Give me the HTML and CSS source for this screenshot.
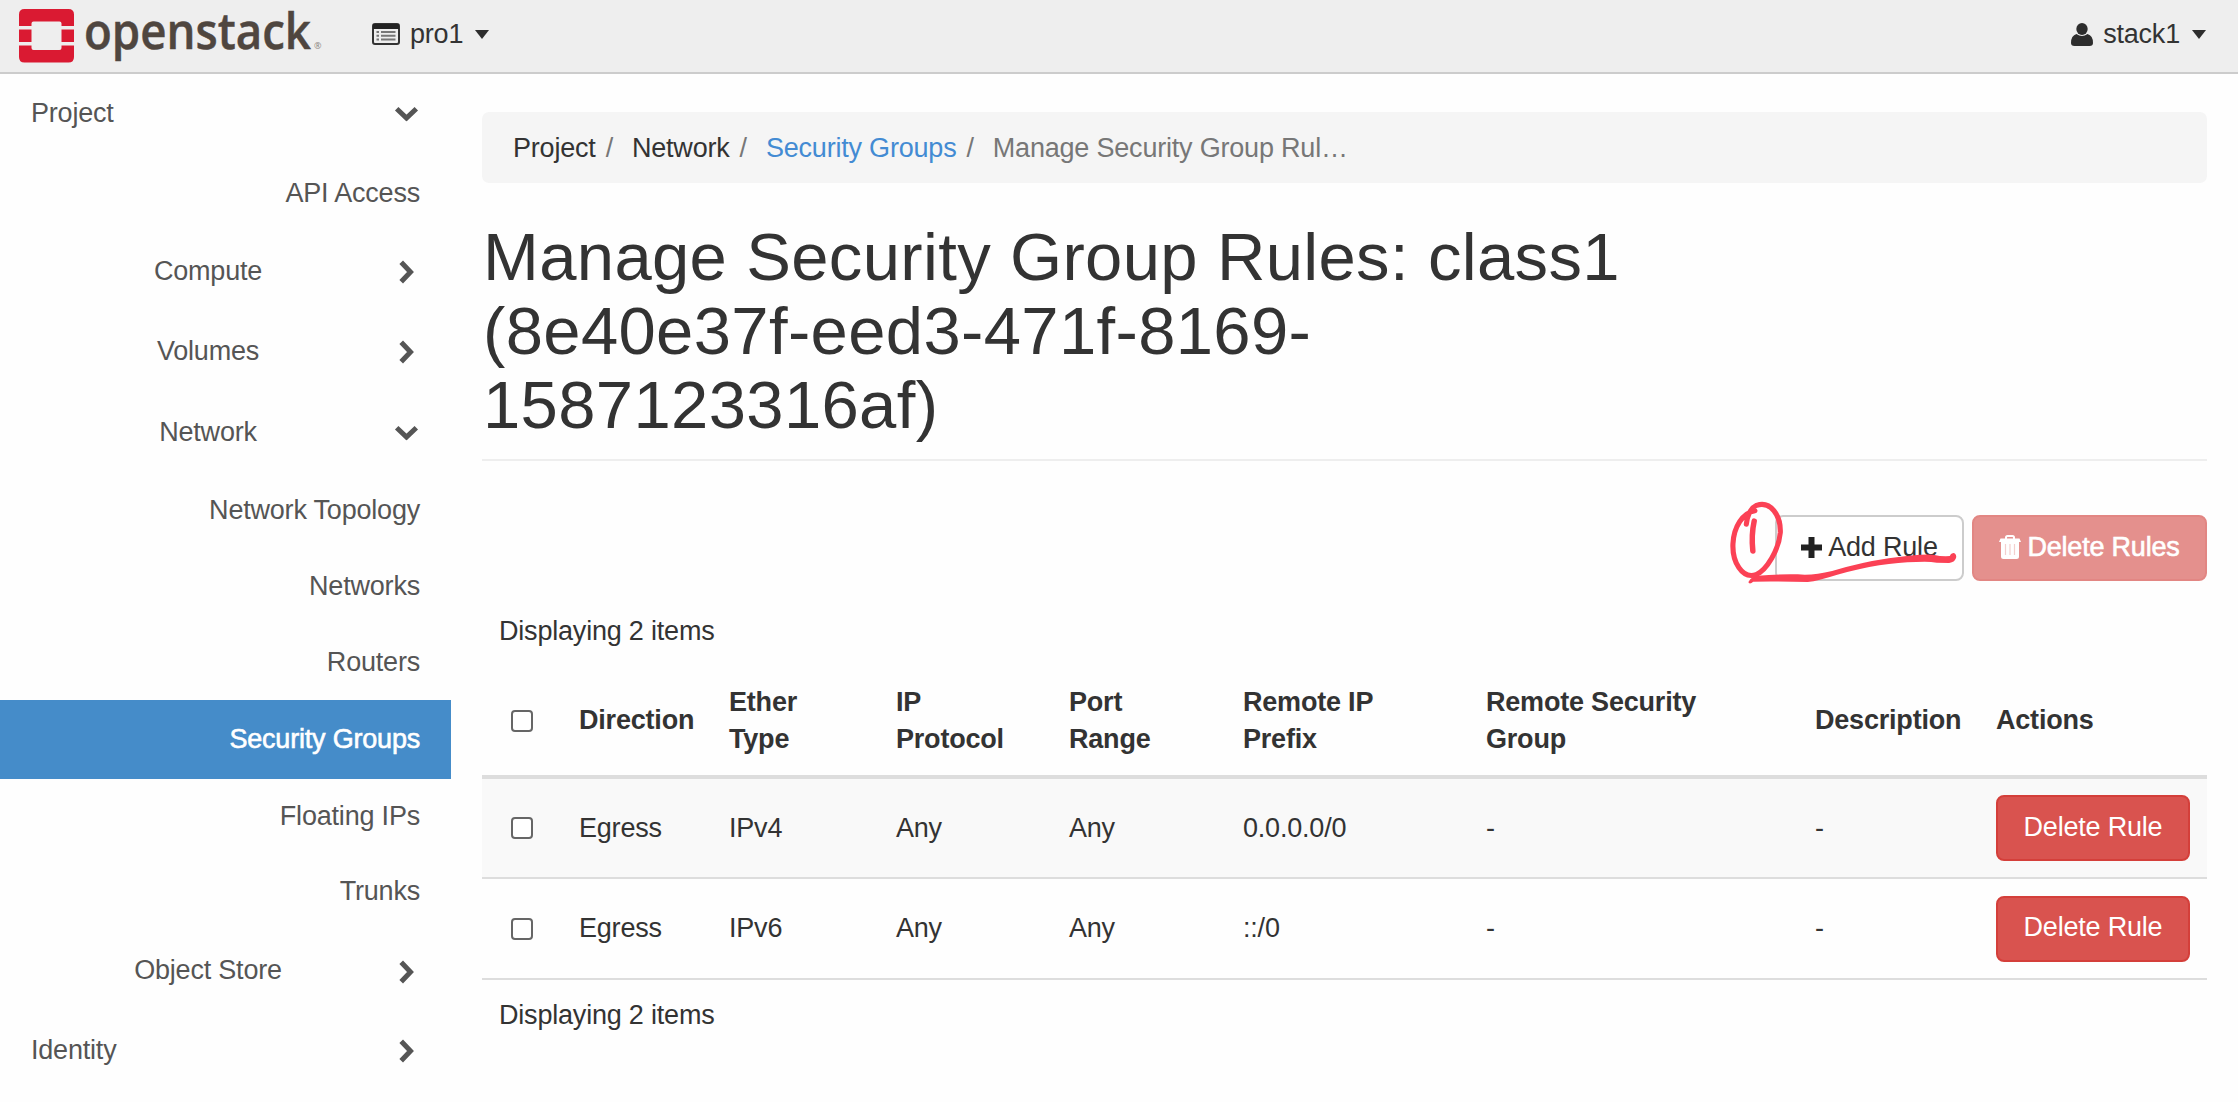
FILE: index.html
```html
<!DOCTYPE html>
<html lang="en">
<head>
<meta charset="utf-8">
<title>Manage Security Group Rules - OpenStack Dashboard</title>
<link rel="stylesheet" href="styles.css">
</head>
<body>
<svg class="sprite" aria-hidden="true">
  <symbol id="chevron" viewBox="0 0 15 24"><path d="M2.2 2.2 L11.5 12 L2.2 21.8" fill="none" stroke="currentColor" stroke-width="5"/></symbol>
</svg>
<header class="topbar">
  <a class="brand">
    <svg class="brand-logo" viewBox="0 0 310 60" role="img">
      <g fill="#da1a32">
        <path d="M0 17V5.500Q0 0 5.500 0H49.500Q55 0 55 5.500V17H42.500V14.500Q42.500 12.500 40.500 12.500H14.500Q12.500 12.500 12.500 14.500V17Z"/>
        <path d="M0 36.500V48Q0 53.500 5.500 53.500H49.500Q55 53.500 55 48V36.500H42.500V39Q42.500 41 40.500 41H14.500Q12.500 41 12.500 39V36.500Z"/>
        <path d="M0 20.500H12.500V33H0ZM42.500 20.500H55V33H42.500Z"/>
      </g>
      <text class="brand-name" x="65" y="40" textLength="227" lengthAdjust="spacingAndGlyphs">openstack</text>
      <text class="brand-mark" x="295" y="40">®</text>
    </svg>
  </a>
  <div class="menu">
    <svg class="icon-list" viewBox="0 0 28 22"><rect x="1" y="1" width="26" height="20" rx="2" fill="#eee" stroke="#333" stroke-width="2"/><path d="M1 1H27V6H1Z" fill="#222"/><path d="M4.500 9H7M9 9H23.500M4.500 12.700H7M9 12.700H23.500M4.500 16.400H7M9 16.400H23.500" stroke="#777" stroke-width="2"/></svg>
    <span class="project-name">pro1</span><i class="caret"></i>
  </div>
  <div class="menu menu-user">
    <svg class="icon-user" viewBox="0 0 22 23"><ellipse cx="11" cy="6" rx="5.700" ry="6" fill="#2d2d2d"/><path d="M5.500 11Q11 15 16.500 11Q22 12.500 22 20Q22 23 18.500 23H3.500Q0 23 0 20Q0 12.500 5.500 11Z" fill="#2d2d2d"/></svg>
    <span>stack1</span><i class="caret"></i>
  </div>
</header>
<div class="layout">
  <nav class="sidebar">
    <a class="nav-row nav-top"><span>Project</span><svg class="chev down"><use href="#chevron"/></svg></a>
    <a class="nav-row nav-leaf nav-api">API Access</a>
    <a class="nav-row nav-group nav-compute"><span>Compute</span><svg class="chev"><use href="#chevron"/></svg></a>
    <a class="nav-row nav-group nav-wide"><span>Volumes</span><svg class="chev"><use href="#chevron"/></svg></a>
    <a class="nav-row nav-group"><span>Network</span><svg class="chev down"><use href="#chevron"/></svg></a>
    <a class="nav-row nav-leaf">Network Topology</a>
    <a class="nav-row nav-leaf">Networks</a>
    <a class="nav-row nav-leaf">Routers</a>
    <a class="nav-row nav-leaf active">Security Groups</a>
    <a class="nav-row nav-leaf nav-after">Floating IPs</a>
    <a class="nav-row nav-leaf">Trunks</a>
    <a class="nav-row nav-group nav-store"><span>Object Store</span><svg class="chev"><use href="#chevron"/></svg></a>
    <a class="nav-row nav-identity"><span>Identity</span><svg class="chev"><use href="#chevron"/></svg></a>
  </nav>
  <main class="content">
    <ol class="breadcrumb">
      <li>Project</li><li>Network</li><li><a class="link">Security Groups</a></li><li class="current">Manage Security Group Rul…</li>
    </ol>
    <h1 class="title">Manage Security Group Rules: class1<br>(8e40e37f-eed3-471f-8169-<br>1587123316af)</h1>
    <div class="actions">
      <button class="btn btn-default"><svg class="icon-plus" viewBox="0 0 21 21"><path d="M10.500 0V21M0 10.500H21" stroke="#222" stroke-width="6"/></svg>Add Rule</button>
      <button class="btn btn-danger muted"><svg class="icon-trash" viewBox="0 0 22 24"><path d="M7 4V2.500Q7 1 8.500 1H13.500Q15 1 15 2.500V4" fill="none" stroke="#fff" stroke-width="2"/><path d="M1.500 3.500H20.500L22 7H0ZM2 7H20V21.500Q20 24 17.500 24H4.500Q2 24 2 21.500Z" fill="#fff"/><path d="M6.500 9V20M11 9V20M15.500 9V20" stroke="#f3cfce" stroke-width="1.200"/></svg>Delete Rules</button>
      <svg class="annotation" viewBox="0 0 1568 360" preserveAspectRatio="none" fill="none" stroke="#fb4155" stroke-linecap="round" stroke-linejoin="round">
        <path stroke-width="15" d="M135 133Q140 88 165 76C205 62 236 105 234 158C230 208 195 270 163 284C122 298 94 245 96 192C98 140 125 98 160 92"/>
        <path stroke-width="16" d="M158 123Q149 165 154 213"/>
        <path stroke="none" fill="#fb4155" d="M143 303Q139 308 144 310Q149 311 155 305Q230 304 314 306Q345 302 400 284Q530 247 630 246Q665 243 690 248L726 249Q744 247 747 231Q746 219 738 219Q730 220 728 228Q705 230 680 224Q640 221 550 235Q470 247 385 273Q330 287 285 283Q220 282 170 287Q150 288 143 303Z"/>
      </svg>
    </div>
    <div class="count">Displaying 2 items</div>
    <table class="rules">
      <colgroup><col class="c-check"><col class="c-dir"><col class="c-ether"><col class="c-proto"><col class="c-port"><col class="c-prefix"><col class="c-group"><col class="c-desc"><col></colgroup>
      <thead><tr><th><i class="check"></i></th><th>Direction</th><th>Ether<br>Type</th><th>IP<br>Protocol</th><th>Port<br>Range</th><th>Remote IP<br>Prefix</th><th>Remote Security<br>Group</th><th>Description</th><th>Actions</th></tr></thead>
      <tbody>
        <tr><td><i class="check"></i></td><td>Egress</td><td>IPv4</td><td>Any</td><td>Any</td><td>0.0.0.0/0</td><td>-</td><td>-</td><td><button class="btn btn-danger">Delete Rule</button></td></tr>
        <tr><td><i class="check"></i></td><td>Egress</td><td>IPv6</td><td>Any</td><td>Any</td><td>::/0</td><td>-</td><td>-</td><td><button class="btn btn-danger">Delete Rule</button></td></tr>
      </tbody>
    </table>
    <div class="count count-bottom">Displaying 2 items</div>
  </main>
</div>
</body>
</html>
```
FILE: styles.css
```css
* { box-sizing: border-box; }
body {
  margin: 0;
  height: 1102px;
  overflow: hidden;
  background: #fefefe;
  color: #333;
  font: 27px/37px "Liberation Sans", Arial, sans-serif;
  letter-spacing: -.2px;
}
.sprite { display: none; }
.topbar {
  display: flex;
  align-items: center;
  height: 74px;
  padding: 0 32px 4px 19px;
  background: #eee;
  border-bottom: 2px solid #ccc;
}
.brand { display: flex; padding-top: 9px; width: 353px; }
.brand-logo { width: 310px; height: 60px; overflow: visible; }
.brand-name { font: 600 50px/60px "Open Sans", sans-serif; fill: #4f463f; stroke: #4f463f; stroke-width: .5px; letter-spacing: 0; }
.brand-mark { font: 9px "Open Sans", sans-serif; fill: #8a8580; letter-spacing: 0; }
.menu { display: flex; align-items: center; }
.menu-user { margin-left: auto; }
.icon-list { width: 28px; height: 22px; margin-right: 10px; }
.icon-user { width: 22px; height: 23px; margin-right: 10px; }
.caret { margin-left: 12px; border: 7.5px solid transparent; border-top: 9px solid #2d2d2d; border-bottom: 0; }
.layout { display: flex; }
.sidebar { width: 451px; color: #555; }
.nav-row { display: flex; align-items: center; height: 80px; padding: 0 31px; }
.nav-top, .nav-identity { justify-content: space-between; }
.nav-top { padding-bottom: 2px; }
.nav-identity { height: 76px; }
.nav-group span { flex: 1; text-align: center; }
.chev { width: 15px; height: 24px; margin: 2px 6px 0 14px; }
.chev.down { transform: rotate(90deg); }
.nav-leaf { height: 76px; justify-content: flex-end; }
.nav-api, .nav-compute { height: 78px; }
.nav-wide { height: 82px; }
.nav-store { height: 83px; }
.nav-after { height: 74px; }
.active { height: 79px; background: #458cc9; color: #fff; -webkit-text-stroke: .6px #fff; }
.content { flex: 1; padding: 38px 31px 0 31px; }
.breadcrumb { display: flex; height: 71px; margin: 0; padding: 18px 30px 16px 31px; list-style: none; background: #f5f5f5; border-radius: 7px; }
.breadcrumb li + li::before { content: "/"; color: #777; padding: 0 19px 0 10px; }
.link { color: #438bd3; }
.current { color: #777; }
.title { margin: 37px 0 0; height: 241px; padding-left: 1px; border-bottom: 2px solid #eee; font-size: 67px; font-weight: 400; line-height: 74px; letter-spacing: .35px; }
.actions { position: relative; display: flex; justify-content: flex-end; gap: 8px; margin-top: 54px; }
.btn {
  display: flex;
  align-items: center;
  justify-content: center;
  height: 66px;
  padding: 0 0 2px;
  border: 2px solid #ccc;
  border-radius: 8px;
  background: #fff;
  color: #333;
  font: inherit;
  letter-spacing: inherit;
}
.btn-default { width: 189px; }
.btn-danger { width: 194px; background: #d9534f; border-color: #d43f3a; color: #fff; }
.muted { width: 235px; background: #e4908d; border-color: #e28683; -webkit-text-stroke: .6px #fff; }
.icon-plus { width: 21px; height: 21px; margin-right: 6px; }
.icon-trash { width: 22px; height: 24px; margin-right: 6px; }
.annotation { position: absolute; left: 1218px; top: -35px; width: 538px; height: 120px; pointer-events: none; }
.count { margin: 32px 17px 0; height: 37px; }
.rules { width: 1725px; margin-top: 16px; border-collapse: collapse; table-layout: fixed; }
.rules th, .rules td { padding: 0 0 0 18px; text-align: left; vertical-align: middle; }
.rules thead tr { height: 111px; border-bottom: 4px solid #ddd; }
.rules tbody tr { height: 101px; border-bottom: 2px solid #ddd; }
.rules tbody tr:first-child { background: #f9f9f9; }
.c-check { width: 79px; }
.c-dir { width: 150px; }
.c-ether { width: 167px; }
.c-proto { width: 173px; }
.c-port { width: 174px; }
.c-prefix { width: 243px; }
.c-group { width: 329px; }
.c-desc { width: 181px; }
.check { display: block; width: 22px; height: 22px; margin-left: 11px; border: 2px solid #666; border-radius: 4px; background: #fff; }
.count-bottom { margin-top: 17px; }
```
